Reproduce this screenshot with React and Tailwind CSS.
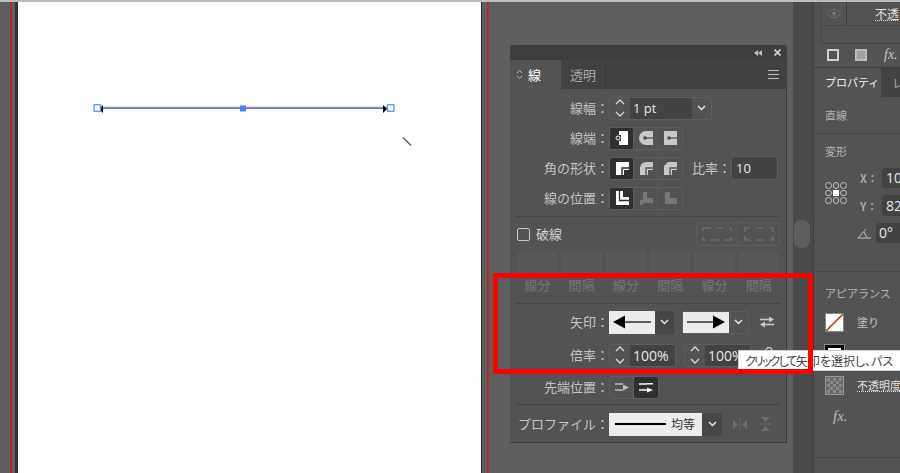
const Chevron = ({ className = "" }) => (
  <svg width="9" height="6" viewBox="0 0 9 6" className={className}>
    <path d="M1 1l3.5 3.5L8 1" fill="none" stroke="#e6e6e6" strokeWidth="1.5" />
  </svg>
);

const Stepper = () => (
  <div className="w-[20px] h-full flex flex-col items-center justify-center gap-[6px]">
    <svg width="10" height="6" viewBox="0 0 10 6"><path d="M1 5l4-4 4 4" fill="none" stroke="#d8d8d8" strokeWidth="1.3" /></svg>
    <svg width="10" height="6" viewBox="0 0 10 6"><path d="M1 1l4 4 4-4" fill="none" stroke="#d8d8d8" strokeWidth="1.3" /></svg>
  </div>
);

const Label = ({ children }) => (
  <div className="w-[99px] shrink-0 text-right text-[13px] text-[#c4c4c4] whitespace-nowrap">{children}</div>
);

const Group = ({ children }) => (
  <div className="flex h-[23px] rounded-[3px] border border-[#5e5e5e]">{children}</div>
);

const ToolBtn = ({ active, children, w = "w-[24px]" }) => (
  <div className={`${w} h-full flex items-center justify-center border-r border-[#5e5e5e] last:border-r-0 ${active ? "bg-[#2f2f2f] rounded-[2px]" : ""}`}>
    {children}
  </div>
);

const Cap = ({ type, active }) => {
  const c = active ? "#ffffff" : "#c8c8c8";
  const d = active ? "#2f2f2f" : "#4a4a4a";
  return (
    <svg width="16" height="16" viewBox="0 0 16 16">
      {type === 0 && <path d="M5 1h9v14H5v-4h2V5H5z" fill={c} />}
      {type === 0 && <circle cx="4" cy="8" r="2" fill="none" stroke="#fff" strokeWidth="1" />}
      {type === 1 && <path d="M8 1h7v14H8A7 7 0 018 1z" fill={c} />}
      {type === 2 && <path d="M2 1h13v14H2z" fill={c} />}
      {type !== 0 && <circle cx="7" cy="8" r="1.8" fill={d} />}
      {type !== 0 && <path d="M7 8h8" stroke={d} strokeWidth="1.2" />}
    </svg>
  );
};

const Corner = ({ type, active }) => {
  const c = active ? "#ffffff" : "#c8c8c8";
  const outer =
    type === 0
      ? "M2 2h13v8h-5v5H2z"
      : type === 1
        ? "M8 2h7v8h-5v5H2V8a6 6 0 016-6z"
        : "M6 2h9v8h-5v5H2V6z";
  return (
    <svg width="16" height="16" viewBox="0 0 16 16">
      <path d={outer} fill={c} />
      <path d="M8 15V8h7" fill="none" stroke={active ? "#2f2f2f" : "#535353"} strokeWidth="1.4" />
    </svg>
  );
};

const Align = ({ type }) => {
  return (
    <svg width="16" height="16" viewBox="0 0 16 16">
      {type === 0 && <path d="M2 1h7v6h6v8H2z" fill="#fff" />}
      {type === 0 && <path d="M5.500 1v9.500H15" fill="none" stroke="#2f2f2f" strokeWidth="1.300" />}
      {type === 1 && <path d="M5 2h4v6h6v5H5v2H2v-5h3z" fill="#777777" />}
      {type === 2 && <path d="M3 2h5v6h7v6H3z" fill="#777777" />}
    </svg>
  );
};

const ArrowTip = ({ flip }) => (
  <svg width="38" height="14" viewBox="0 0 38 14" className={flip ? "-scale-x-100" : ""}>
    <path d="M0 7h28" stroke="#000" strokeWidth="1.2" />
    <path d="M26 .5L38 7 26 13.500z" fill="#000" />
  </svg>
);

const Swap = () => (
  <svg width="14" height="12" viewBox="0 0 14 12">
    <path d="M0 3.500h10" stroke="#c8c8c8" strokeWidth="1.600" />
    <path d="M9 .5l5 3-5 3z" fill="#c8c8c8" />
    <path d="M14 8.500H4" stroke="#c8c8c8" strokeWidth="1.600" />
    <path d="M5 5.500l-5 3 5 3z" fill="#c8c8c8" />
  </svg>
);

const TipPos = ({ active }) => {
  const c = active ? "#ffffff" : "#bdbdbd";
  return (
    <svg width="14" height="12" viewBox="0 0 14 12">
      <path d="M0 3h8M0 9h8" stroke={c} strokeWidth="1.400" />
      <path d={active ? "M8 6.500l6 2.500-6 2.500zM8 2h6v1.500H8z" : "M8 3.500l6 3-6 3z"} fill={c} />
    </svg>
  );
};

const Sep = ({ className = "" }) => <div className={`h-px shrink-0 bg-[#454545] ${className}`} />;

const Dash = ({ alt }) => (
  <svg width="30" height="14" viewBox="0 0 30 14">
    <path
      d={alt ? "M1 5V1h5M12 1h7M25 1h4v4M1 9v4h5M12 13h7M25 13h4V9" : "M1 4V1h8M14 1h7M27 1h2v3M1 10v3h3M9 13h8M22 13h7v-3"}
      fill="none"
      stroke="#777"
      strokeWidth="1.200"
    />
  </svg>
);

const Num = ({ children }) => (
  <div className="w-[45px] bg-[#434343] text-[#e8e8e8] text-[14px] leading-[21px] pl-[3px] font-['Open_Sans',sans-serif]">{children}</div>
);

function StrokePanel() {
  return (
    <div className="absolute left-[28px] top-[43px] w-[277px] h-[398px] bg-[#535353] border-b border-r border-[#3c3c3c] rounded-t-[3px] flex flex-col">
      <div className="h-[15px] bg-[#3e3e3e] rounded-t-[3px] flex items-center justify-end gap-[12px] pr-[5px]">
        <svg width="8" height="6" viewBox="0 0 8 6"><path d="M4 0v6L0 3zM8 0v6L4 3z" fill="#c0c0c0" /></svg>
        <svg width="7" height="7" viewBox="0 0 7 7"><path d="M.5.5l6 6M6.500.5l-6 6" stroke="#d0d0d0" strokeWidth="1.700" /></svg>
      </div>
      <div className="h-[29px] bg-[#424242] flex items-stretch text-[13px]">
        <div className="w-[51px] bg-[#535353] flex items-center pl-[6px] gap-[5px] text-white">
          <svg width="7" height="11" viewBox="0 0 7 11"><path d="M1 4l2.500-2.500L6 4M1 7l2.500 2.500L6 7" fill="none" stroke="#bbb" strokeWidth="1" /></svg>
          <span>線</span>
        </div>
        <div className="w-[45px] flex items-center justify-center text-[#a8a8a8] border-r border-[#3a3a3a]">透明</div>
        <div className="flex-1 flex items-center justify-end pr-[7px]">
          <div className="w-[11px] h-[9px] flex flex-col justify-between">
            <div className="h-px bg-[#c0c0c0]" /><div className="h-px bg-[#c0c0c0]" /><div className="h-px bg-[#c0c0c0]" />
          </div>
        </div>
      </div>

      <div className="flex items-center h-[24px] mt-[7px]">
        <Label>線幅：</Label>
        <Group>
          <Stepper />
          <div className="w-[62px] bg-[#434343] text-[#e8e8e8] text-[13px] pl-[3px] leading-[21px] font-['Open_Sans',sans-serif]">1 pt</div>
          <div className="w-[19px] flex items-center justify-center"><Chevron /></div>
        </Group>
      </div>

      <div className="flex items-center h-[24px] mt-[6px]">
        <Label>線端：</Label>
        <Group>
          {[0, 1, 2].map((t) => <ToolBtn key={t} active={t === 0}><Cap type={t} active={t === 0} /></ToolBtn>)}
        </Group>
      </div>

      <div className="flex items-center h-[24px] mt-[6px]">
        <Label>角の形状：</Label>
        <Group>
          {[0, 1, 2].map((t) => <ToolBtn key={t} active={t === 0}><Corner type={t} active={t === 0} /></ToolBtn>)}
        </Group>
        <div className="ml-[9px] text-[13px] text-[#c4c4c4] w-[39px] whitespace-nowrap">比率：</div>
        <div className="w-[47px] h-[24px] rounded-[3px] bg-[#434343] border border-[#5e5e5e] text-[#e8e8e8] text-[13px] pl-[4px] leading-[22px] font-['Open_Sans',sans-serif]">10</div>
      </div>

      <div className="flex items-center h-[24px] mt-[6px]">
        <Label>線の位置：</Label>
        <Group>
          {[0, 1, 2].map((t) => <ToolBtn key={t} active={t === 0}><Align type={t} /></ToolBtn>)}
        </Group>
      </div>

      <Sep className="mx-[6px] mt-[6px]" />

      <div className="flex items-center h-[24px] mt-[5px] pl-[7px] pr-[6px]">
        <div className="w-[13px] h-[13px] border border-[#c8c8c8] rounded-[2px]" />
        <span className="ml-[6px] text-[13px] text-[#d0d0d0]">破線</span>
        <div className="ml-auto flex h-[24px] rounded-[3px] border border-[#5e5e5e]">
          <div className="w-[41px] flex items-center justify-center border-r border-[#5e5e5e]"><Dash /></div>
          <div className="w-[41px] flex items-center justify-center"><Dash alt /></div>
        </div>
      </div>

      <div className="grid grid-cols-6 gap-x-[4px] mx-[7px] mt-[5px]">
        {["線分", "間隔", "線分", "間隔", "線分", "間隔"].map((t, i) => (
          <div key={i} className="flex flex-col items-center">
            <div className="w-full h-[22px] bg-[#585858]" />
            <div className="mt-[3px] text-[13px] leading-[18px] text-[#777777]">{t}</div>
          </div>
        ))}
      </div>

      <Sep className="mx-[6px] mt-[9px]" />

      <div className="flex items-center h-[24px] mt-[6px]">
        <Label>矢印：</Label>
        <div className="flex h-[23px] rounded-[2px]">
          <div className="w-[46px] bg-[#ececec] flex items-center justify-center"><ArrowTip flip /></div>
          <div className="w-[19px] bg-[#474747] flex items-center justify-center"><Chevron /></div>
        </div>
        <div className="flex h-[23px] ml-[8px] rounded-[2px] border border-[#5e5e5e]">
          <div className="w-[46px] bg-[#ececec] flex items-center justify-center"><ArrowTip /></div>
          <div className="w-[19px] flex items-center justify-center"><Chevron /></div>
        </div>
        <div className="ml-[11px]"><Swap /></div>
      </div>

      <div className="flex items-center h-[24px] mt-[9px]">
        <Label>倍率：</Label>
        <Group>
          <Stepper />
          <Num>100%</Num>
        </Group>
        <div className="flex h-[23px] ml-[8px] rounded-[3px] border border-[#5e5e5e]">
          <Stepper />
          <Num>100%</Num>
        </div>
        <svg width="12" height="16" viewBox="0 0 12 16" className="ml-[12px]">
          <path d="M3 6V3.500a3 3 0 016 0V6M3 10v2.500a3 3 0 006 0V10M6 5v6" fill="none" stroke="#c8c8c8" strokeWidth="1.300" />
        </svg>
      </div>

      <div className="flex items-center h-[24px] mt-[8px]">
        <Label>先端位置：</Label>
        <Group>
          <ToolBtn><TipPos /></ToolBtn>
          <ToolBtn active><TipPos active /></ToolBtn>
        </Group>
      </div>

      <Sep className="mx-[6px] mt-[5px]" />

      <div className="flex items-center h-[24px] mt-[7px]">
        <Label>プロファイル：</Label>
        <div className="flex h-[23px] rounded-[2px]">
          <div className="w-[93px] bg-[#ececec] flex items-center pl-[6px]">
            <div className="w-[51px] h-[2px] bg-black" />
            <span className="ml-[5px] text-[12px] text-[#333333]">均等</span>
          </div>
          <div className="w-[20px] bg-[#474747] flex items-center justify-center"><Chevron /></div>
        </div>
        <div className="ml-[10px] flex items-center gap-[11px]">
          <svg width="16" height="13" viewBox="0 0 16 13"><path d="M1 2l5 4.500L1 11zM15 2l-5 4.500 5 4.500z" fill="#6e6e6e" /><path d="M8 0v13" stroke="#6e6e6e" strokeDasharray="2 1" /></svg>
          <svg width="13" height="16" viewBox="0 0 13 16"><path d="M2 1l4.500 5L11 1zM2 15l4.500-5 4.500 5z" fill="#6e6e6e" /><path d="M0 8h13" stroke="#6e6e6e" strokeDasharray="2 1" /></svg>
        </div>
      </div>
    </div>
  );
}

function PropertiesPanel() {
  return (
    <div className="flex-1 min-w-0 bg-[#535353] border-l border-[#3e3e3e] flex flex-col text-[11px] leading-[16px] text-[#c4c4c4] whitespace-nowrap overflow-hidden">
      <div className="h-[66px] shrink-0 border-b border-[#3e3e3e] pl-[6px]">
        <div className="h-[42px] w-[90px] border-l border-b border-[#484848] rounded-bl-[3px]">
          <div className="h-[24px] border-b border-[#484848] flex">
            <div className="w-[26px] shrink-0 flex items-center justify-center border-r border-[#3e3e3e]">
              <svg width="14" height="9" viewBox="0 0 14 9"><path d="M.5 4.500C3 1 5 .5 7 .5s4 .5 6.500 4C11 8 9 8.500 7 8.500S3 8 .5 4.500z" fill="none" stroke="#777" /><circle cx="7" cy="4.500" r="2" fill="#777" /></svg>
            </div>
            <span className="ml-[28px] text-[12px] leading-[24px] text-[#e0e0e0] underline decoration-dotted">不透</span>
          </div>
        </div>
        <div className="flex items-center h-[22px] pl-[7px]">
          <div className="w-[12px] h-[12px] shrink-0 border-2 border-[#d0d0d0]" />
          <div className="w-[12px] h-[12px] shrink-0 ml-[16px] border-2 border-[#bbbbbb] bg-[#a0a0a0]" />
          <span className="ml-[17px] italic text-[14px] text-[#c8c8c8] font-['Liberation_Serif',serif]">fx.</span>
        </div>
      </div>

      <div className="h-[29px] shrink-0 bg-[#424242] flex">
        <div className="w-[67px] shrink-0 bg-[#535353] pl-[11px] text-[11px] leading-[29px] text-[#f0f0f0]">プロパティ</div>
        <div className="pl-[11px] text-[12px] leading-[29px] text-[#a8a8a8]">レ</div>
      </div>

      <div className="h-[36px] shrink-0 pl-[11px] flex items-center text-[#b4b4b4]">直線</div>
      <Sep />
      <div className="pl-[11px] pt-[9px] text-[#b4b4b4]">変形</div>

      <div className="flex mt-[9px]">
        <div className="ml-[11px] mt-[14px] w-[22px] h-[22px] shrink-0 grid grid-cols-3 grid-rows-3 gap-[1px]">
          {[0, 1, 2, 3, 4, 5, 6, 7, 8].map((i) => (
            <div key={i} className={i === 4 ? "bg-white" : "border border-[#c0c0c0] rounded-full"} />
          ))}
        </div>
        <div className="ml-[13px] flex flex-col gap-[7px] shrink-0">
          <div className="flex items-center gap-[5px]">
            <span className="w-[17px] shrink-0 font-bold text-[#a8a8a8]">X：</span>
            <div className="w-[40px] h-[20px] shrink-0 bg-[#434343] rounded-l-[3px] pl-[4px] text-[14px] leading-[20px] text-[#e8e8e8] font-['Open_Sans',sans-serif]">10</div>
          </div>
          <div className="flex items-center gap-[5px]">
            <span className="w-[17px] shrink-0 font-bold text-[#a8a8a8]">Y：</span>
            <div className="w-[40px] h-[21px] shrink-0 bg-[#434343] rounded-l-[3px] pl-[4px] text-[14px] leading-[21px] text-[#e8e8e8] font-['Open_Sans',sans-serif]">82</div>
          </div>
          <div className="flex items-center gap-[5px] -ml-[3px]">
            <svg width="14" height="11" viewBox="0 0 14 11" className="shrink-0"><path d="M1 10h13M1 10l8-9M7 4l3 6" fill="none" stroke="#c0c0c0" /></svg>
            <div className="w-[40px] h-[20px] shrink-0 bg-[#434343] rounded-l-[3px] pl-[3px] text-[14px] leading-[20px] text-[#e8e8e8] font-['Open_Sans',sans-serif]">0°</div>
          </div>
        </div>
      </div>

      <Sep className="mt-[28px]" />
      <div className="pl-[11px] pt-[13px] text-[#b4b4b4]">アピアランス</div>
      <div className="flex items-center h-[18px] mt-[12px] pl-[11px]">
        <svg width="19" height="19" viewBox="0 0 19 19" className="shrink-0"><rect x=".5" y=".5" width="18" height="18" fill="#fff" stroke="#888" /><path d="M1 18L18 1" stroke="#e51c1c" strokeWidth="1.600" /></svg>
        <span className="ml-[13px] text-[#c4c4c4]">塗り</span>
      </div>
      <div className="flex items-center h-[18px] mt-[14px] pl-[11px]">
        <div className="w-[19px] h-[19px] shrink-0 bg-white border-[3px] border-black outline outline-[#888]" />
      </div>
      <div className="flex items-center h-[18px] mt-[13px] pl-[11px]">
        <svg width="19" height="19" viewBox="0 0 19 19" className="shrink-0">
          <rect x=".5" y=".5" width="18" height="18" fill="#6a6a6a" stroke="#999" />
          <path d="M2 2h3v3H2zM8 2h3v3H8zM14 2h3v3h-3zM5 5h3v3H5zM11 5h3v3h-3zM2 8h3v3H2zM8 8h3v3H8zM14 8h3v3h-3zM5 11h3v3H5zM11 11h3v3h-3zM2 14h3v3H2zM8 14h3v3H8zM14 14h3v3h-3z" fill="#8a8a8a" />
        </svg>
        <span className="ml-[13px] text-[#e0e0e0] underline decoration-dotted">不透明度</span>
      </div>
      <div className="pl-[19px] mt-[14px] italic text-[15px] text-[#b8b8b8] font-['Liberation_Serif',serif]">fx.</div>
      <Sep className="mt-[33px]" />
    </div>
  );
}

export default function App() {
  return (
    <div className="relative w-[900px] h-[473px] overflow-hidden bg-[#5f5f5f] flex flex-col font-['Noto_Sans_CJK_JP','Noto_Sans',sans-serif]">
      <div className="h-[2px] bg-[#bdbdbd] shrink-0" />
      <div className="flex-1 min-h-0 flex">
        <div className="w-[10px] bg-[#5f5f5f]" />
        <div className="w-[2px] bg-[#b32a2a]" />
        <div className="w-[3px] bg-[#5f5f5f]" />
        <div className="w-[3px] bg-[#333333]" />
        <div className="w-[463px] bg-white">
          <svg width="463" height="471" viewBox="0 0 463 471">
            <path d="M82 105.500h288" stroke="#999" strokeWidth="1.500" />
            <path d="M80 106.500h290" stroke="#4a78e0" strokeWidth="1.200" />
            <path d="M85 103v8l-4-4zM365 103v8l4-4z" fill="#000" />
            <rect x="76" y="102.750" width="6.500" height="6.500" fill="#fff" stroke="#6a94ff" strokeWidth="1.400" />
            <rect x="369.500" y="102.750" width="6.500" height="6.500" fill="#fff" stroke="#6a94ff" strokeWidth="1.400" />
            <rect x="222" y="103.500" width="6" height="6" fill="#4a7cff" />
            <path d="M385 135.500l8 8" stroke="#555" strokeWidth="1.300" />
          </svg>
        </div>
        <div className="w-px bg-[#2e2e2e]" />
        <div className="relative w-[311px] flex">
          <div className="w-[5px] bg-[#5f5f5f]" />
          <div className="w-[2px] bg-[#b32a2a]" />
          <div className="flex-1 bg-[#5f5f5f]" />
          <StrokePanel />
        </div>
        <div className="w-[20px] shrink-0 bg-[#4a4a4a] pt-[218px] pl-[1px]">
          <div className="w-[16px] h-[28px] rounded-[7px] bg-[#5e5e5e]" />
        </div>
        <PropertiesPanel />
      </div>

      <div className="absolute left-[738px] top-[350px] w-[162px] h-[21px] bg-white border-y border-l border-[#d0d0d0] pl-[6px] text-[12px] leading-[19px] text-[#444444] whitespace-nowrap overflow-hidden [font-feature-settings:'palt']">
        <span className="tracking-[-1.8px]">クリックして</span>
        <span>矢印を選択し、パス</span>
      </div>
      <div className="absolute left-[493px] top-[273px] w-[320px] h-[101px] border-[5px] border-[#fe0000]" />
    </div>
  );
}
